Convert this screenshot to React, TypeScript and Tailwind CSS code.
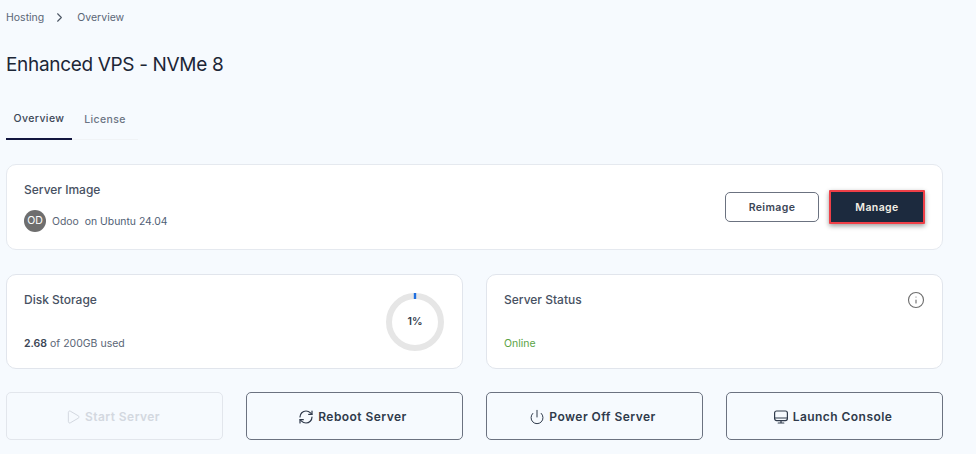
import { Play, RefreshCw, Power, Info, ChevronRight } from 'lucide-react'

function ConsoleIcon() {
  return (
    <svg width="16" height="16" viewBox="0 0 16 16" fill="none" stroke="currentColor" strokeWidth="1.2" strokeLinecap="round">
      <rect x="1.6" y="2" width="12.8" height="9.6" rx="2" />
      <path d="M1.8 9h12.4" />
      <path d="M8 11.6v2.2M5.2 14h5.6" />
    </svg>
  )
}

function ActionButton({ icon, label, disabled }: { icon: React.ReactNode; label: string; disabled?: boolean }) {
  return (
    <button
      disabled={disabled}
      className={`h-[48px] flex items-center justify-center gap-[4px] rounded-[5px] border pt-[1px] pr-[4px] text-[12px] font-semibold tracking-[0.45px] ${
        disabled ? 'border-[#e2e6ec] text-[#d3d8e0]' : 'border-[#6b7280] text-[#2f3a4b]'
      }`}
    >
      {icon}
      {label}
    </button>
  )
}

export default function App() {
  return (
    <div className="w-[976px] h-[454px] overflow-hidden bg-[#f6fafe] pl-[6px] pr-[33px] font-['Inter',sans-serif]">
      <div className="h-[34px] flex items-center text-[10.5px] text-[#5b6676] pt-[1px]">
        <span>Hosting</span>
        <ChevronRight size={15} strokeWidth={1.7} className="ml-[8px] mr-[10px] text-[#4b5563]" />
        <span>Overview</span>
      </div>

      <h1 className="mt-[15px] h-[32px] leading-[32px] text-[19px] tracking-[-0.33px] text-[#1c2636]">Enhanced VPS - NVMe 8</h1>

      <div className="mt-[19px] flex w-[132px] h-[40px] border-b border-[#f0f3f6] text-[10.5px] font-medium tracking-[0.4px]">
        <div className="w-[66px] h-[40px] border-b-2 border-[#12163f] flex items-center justify-center text-[#3c4656]">Overview</div>
        <div className="w-[66px] h-[40px] flex items-center justify-center text-[#6b7483]">License</div>
      </div>

      <div className="mt-[24px] h-[86px] bg-white rounded-[10px] border border-[#e5e9ef] pl-[17px] pr-[17px] flex items-center justify-between">
        <div>
          <div className="text-[12px] font-medium leading-[16px] text-[#475162]">Server Image</div>
          <div className="mt-[12px] flex items-center text-[10.4px] text-[#5b6676]">
            <span className="w-[22px] h-[22px] rounded-full bg-[#6e6e6e] text-white text-[10.5px] flex items-center justify-center">OD</span>
            <span className="ml-[6px] pt-[1px]">Odoo</span>
            <span className="ml-[6px] pt-[1px] text-[#4f6075]">on Ubuntu 24.04</span>
          </div>
        </div>
        <div className="flex items-center gap-[10px]">
          <button className="w-[94px] h-[30px] pt-[1px] rounded-[5px] border border-[#6b7280] text-[10.5px] font-semibold tracking-[0.4px] text-[#3c4656]">Reimage</button>
          <button className="w-[96px] h-[34px] pt-[1px] rounded-[1px] border-2 border-[#ee3f47] bg-[#1c2a3e] text-[10.5px] font-semibold tracking-[0.4px] text-[#f3f0e6] shadow-[0_2px_5px_rgba(0,0,0,0.4)]">Manage</button>
        </div>
      </div>

      <div className="mt-[24px] grid grid-cols-2 gap-[23px]">
        <div className="h-[95px] bg-white rounded-[10px] border border-[#e1e5ec] pl-[17px] pr-[17px] flex items-center justify-between">
          <div className="h-[95px] flex flex-col justify-between pt-[19px] pb-[18px]">
            <div className="text-[12px] font-medium leading-[14px] text-[#475162]">Disk Storage</div>
            <div className="text-[10.5px] leading-[14px] text-[#5b6676]"><span className="font-semibold text-[#3c4656]">2.68</span> of 200GB used</div>
          </div>
          <div className="relative w-[60px] h-[60px]">
            <svg width="60" height="60" viewBox="0 0 60 60">
              <circle cx="30" cy="30" r="26" fill="none" stroke="#e6e6e6" strokeWidth="6" />
              <path d="M30 1 V7" stroke="#1f6fe0" strokeWidth="2.4" />
            </svg>
            <span className="absolute inset-0 flex items-center justify-center text-[10.5px] font-semibold text-[#2f3a4b]">1%</span>
          </div>
        </div>
        <div className="h-[95px] bg-white rounded-[10px] border border-[#e1e5ec] pl-[17px] pr-[17px] flex justify-between">
          <div className="flex flex-col justify-between pt-[18px] pb-[17px]">
            <div className="text-[12px] font-medium leading-[14px] text-[#475162]">Server Status</div>
            <div className="text-[10.5px] leading-[14px] text-[#5aa345]">Online</div>
          </div>
          <Info size={18} strokeWidth={1.5} className="mt-[16px] text-[#6e6e6e]" />
        </div>
      </div>

      <div className="mt-[23px] grid grid-cols-4 gap-[23px]">
        <ActionButton disabled label="Start Server" icon={<Play size={16} strokeWidth={1.5} />} />
        <ActionButton label="Reboot Server" icon={<RefreshCw size={16} strokeWidth={1.8} />} />
        <ActionButton label="Power Off Server" icon={<Power size={16} strokeWidth={1.5} />} />
        <ActionButton label="Launch Console" icon={<ConsoleIcon />} />
      </div>
    </div>
  )
}
